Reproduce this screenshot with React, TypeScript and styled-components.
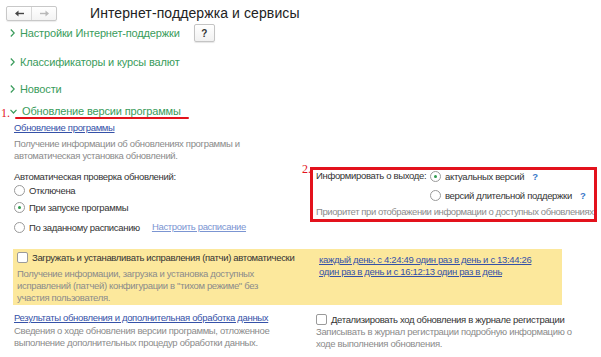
import React from 'react';
import styled, { createGlobalStyle } from 'styled-components';

const GlobalStyle = createGlobalStyle`
  html, body {
    margin: 0;
    padding: 0;
    background: #fff;
  }
  body {
    font-family: "Liberation Sans", Arial, sans-serif;
    color: #333;
  }
`;

const Page = styled.div`
  width: 601px;
  height: 357px;
  overflow: hidden;
  position: relative;
  font-size: 9.5px;
  letter-spacing: -0.33px;
  white-space: nowrap;
`;

const Header = styled.div`
  display: flex;
  align-items: center;
  padding: 6px 0 0 6px;
  height: 15px;
`;

const NavGroup = styled.div`
  display: flex;
  height: 13px;
  border: 1px solid #c8c8c8;
  border-radius: 2px;
  background: linear-gradient(#fff, #f3f3f3);
  box-shadow: 0 1px 1px rgba(0, 0, 0, 0.08);
`;

const NavButton = styled.div<{ $disabled?: boolean }>`
  width: 24px;
  display: flex;
  align-items: center;
  justify-content: center;
  color: ${(p) => (p.$disabled ? '#b8b8b8' : '#444')};
  & + & {
    border-left: 1px solid #d8d8d8;
  }
`;

const Title = styled.h1`
  margin: -2px 0 0 33px;
  font-size: 14px;
  font-weight: normal;
  color: #222;
  letter-spacing: 0.1px;
`;

const SectionRow = styled.div<{ $top: number }>`
  display: flex;
  align-items: center;
  margin-top: ${(p) => p.$top}px;
  padding-left: 10px;
  height: 16px;
  position: relative;
`;

const SectionTitle = styled.span`
  margin-left: 5px;
  font-size: 11px;
  letter-spacing: -0.15px;
  color: #3a9c5c;
`;

const HelpButton = styled.div`
  margin-left: 14px;
  width: 19px;
  height: 16px;
  border: 1px solid #c4c4c4;
  border-radius: 2px;
  background: linear-gradient(#fff, #f1f1f1);
  display: flex;
  align-items: center;
  justify-content: center;
  font-size: 10px;
  font-weight: bold;
  color: #333;
  box-shadow: 0 1px 1px rgba(0, 0, 0, 0.1);
`;

const RedUnderline = styled.div`
  position: absolute;
  left: 15px;
  top: 14px;
  width: 174px;
  height: 2px;
  border-radius: 1px;
  background: #e3121c;
`;

const Marker = styled.span<{ $left: number; $top: number }>`
  position: absolute;
  left: ${(p) => p.$left}px;
  top: ${(p) => p.$top}px;
  font-family: "Liberation Serif", "Times New Roman", serif;
  font-size: 12px;
  letter-spacing: 0;
  color: #e3121c;
`;

const Body = styled.div`
  display: grid;
  grid-template-columns: 296px 1fr;
  padding-left: 14px;
  margin-top: 3px;
`;

const Column = styled.div<{ $top?: number }>`
  display: flex;
  flex-direction: column;
  padding-top: ${(p) => p.$top ?? 0}px;
`;

const Link = styled.a<{ $light?: boolean }>`
  color: ${(p) => (p.$light ? '#7b95d2' : '#3551a8')};
  text-decoration: underline;
  line-height: 12px;
  cursor: pointer;
`;

const Hint = styled.div<{ $top?: number }>`
  color: #8b8b8b;
  line-height: 12px;
  margin-top: ${(p) => p.$top ?? 0}px;
`;

const BoxHint = styled(Hint)`
  grid-column: 1 / 3;
  margin-top: -2px;
  letter-spacing: -0.42px;
`;

const Label = styled.div<{ $top?: number }>`
  line-height: 12px;
  margin-top: ${(p) => p.$top ?? 0}px;
`;

const RadioRow = styled.div<{ $top?: number }>`
  display: flex;
  align-items: center;
  gap: 4px;
  height: 12px;
  margin-top: ${(p) => p.$top ?? 0}px;
`;

const RadioCircle = styled.span<{ $checked?: boolean }>`
  box-sizing: border-box;
  width: 11px;
  height: 11px;
  border-radius: 50%;
  border: 1px solid #9a9a9a;
  background: #fff;
  display: inline-flex;
  align-items: center;
  justify-content: center;
  flex: none;
  &::after {
    content: '';
    width: 3px;
    height: 3px;
    border-radius: 50%;
    background: ${(p) => (p.$checked ? '#2f9a4e' : 'transparent')};
  }
`;

const CheckBox = styled.span`
  box-sizing: border-box;
  width: 11px;
  height: 11px;
  border: 1px solid #9a9a9a;
  border-radius: 2px;
  background: #fff;
  flex: none;
`;

const Question = styled.span`
  color: #3a78c8;
  font-weight: bold;
  margin-left: 4px;
`;

const RightColumn = styled.div`
  padding-top: 45px;
  position: relative;
`;

const RedBox = styled.div`
  box-sizing: border-box;
  width: 287px;
  height: 55px;
  border: 3px solid #e3121c;
  padding: 0 0 0 3px;
  display: grid;
  grid-template-columns: 114px 1fr;
  row-gap: 6px;
`;

const YellowBand = styled.div`
  display: grid;
  grid-template-columns: 302px 1fr;
  margin: 16px 0 0 13px;
  width: 549px;
  height: 56px;
  background: #fce89c;
  box-sizing: border-box;
  padding: 1px 0 0 4px;
`;

const CheckRow = styled.div`
  display: flex;
  align-items: center;
  gap: 4px;
  height: 14px;
`;

const Bottom = styled.div`
  display: grid;
  grid-template-columns: 302px 1fr;
  padding-left: 14px;
  margin-top: 7px;
`;

const Chevron = ({ open }: { open?: boolean }) =>
  open ? (
    <svg width="7" height="5" viewBox="0 0 7 5">
      <polyline points="0.5,0.8 3.5,4 6.5,0.8" fill="none" stroke="#3a9c5c" strokeWidth="1.2" />
    </svg>
  ) : (
    <svg width="5" height="8" viewBox="0 0 5 8">
      <polyline points="0.8,0.5 4.2,4 0.8,7.5" fill="none" stroke="#3a9c5c" strokeWidth="1.2" />
    </svg>
  );

const Arrow = ({ back }: { back?: boolean }) => (
  <svg width="9" height="7" viewBox="0 0 9 7">
    {back ? (
      <>
        <line x1="2" y1="3.5" x2="9" y2="3.5" stroke="currentColor" strokeWidth="1.4" />
        <polygon points="0,3.5 3.5,0.5 3.5,6.5" fill="currentColor" />
      </>
    ) : (
      <>
        <line x1="0" y1="3.5" x2="7" y2="3.5" stroke="currentColor" strokeWidth="1.4" />
        <polygon points="9,3.5 5.5,0.5 5.5,6.5" fill="currentColor" />
      </>
    )}
  </svg>
);

const Radio = ({ checked, children, top }: { checked?: boolean; children: React.ReactNode; top?: number }) => (
  <RadioRow $top={top}>
    <RadioCircle $checked={checked} />
    {children}
  </RadioRow>
);

export default function App() {
  return (
    <Page>
      <GlobalStyle />
      <Header>
        <NavGroup>
          <NavButton>
            <Arrow back />
          </NavButton>
          <NavButton $disabled>
            <Arrow />
          </NavButton>
        </NavGroup>
        <Title>Интернет-поддержка и сервисы</Title>
      </Header>

      <SectionRow $top={4}>
        <Chevron />
        <SectionTitle>Настройки Интернет-поддержки</SectionTitle>
        <HelpButton>?</HelpButton>
      </SectionRow>
      <SectionRow $top={13}>
        <Chevron />
        <SectionTitle>Классификаторы и курсы валют</SectionTitle>
      </SectionRow>
      <SectionRow $top={11}>
        <Chevron />
        <SectionTitle>Новости</SectionTitle>
      </SectionRow>
      <SectionRow $top={6}>
        <Marker $left={1} $top={3}>1.</Marker>
        <Chevron open />
        <SectionTitle>Обновление версии программы</SectionTitle>
        <RedUnderline />
      </SectionRow>

      <Body>
        <Column>
          <Link>Обновление программы</Link>
          <Hint $top={4}>
            Получение информации об обновлениях программы и
            <br />
            автоматическая установка обновлений.
          </Hint>
          <Label $top={9}>Автоматическая проверка обновлений:</Label>
          <Radio top={1}>Отключена</Radio>
          <Radio checked top={5}>
            При запуске программы
          </Radio>
          <Radio top={8}>
            По заданному расписанию
            <Link $light style={{ marginLeft: 8 }}>Настроить расписание</Link>
          </Radio>
        </Column>
        <RightColumn>
          <Marker $left={-8} $top={40}>2.</Marker>
          <RedBox>
            <Label>Информировать о выходе:</Label>
            <Radio checked>
              актуальных версий<Question>?</Question>
            </Radio>
            <span />
            <Radio>
              версий длительной поддержки<Question>?</Question>
            </Radio>
            <BoxHint>Приоритет при отображении информации о доступных обновлениях</BoxHint>
          </RedBox>
        </RightColumn>
      </Body>

      <YellowBand>
        <Column>
          <CheckRow>
            <CheckBox />
            Загружать и устанавливать исправления (патчи) автоматически
          </CheckRow>
          <Hint $top={4}>
            Получение информации, загрузка и установка доступных
            <br />
            исправлений (патчей) конфигурации в "тихом режиме" без
            <br />
            участия пользователя.
          </Hint>
        </Column>
        <Column $top={4}>
          <Link>
            каждый день; с 4:24:49 один раз в день и с 13:44:26
            <br />
            один раз в день и с 16:12:13 один раз в день
          </Link>
        </Column>
      </YellowBand>

      <Bottom>
        <Column>
          <Link>Результаты обновления и дополнительная обработка данных</Link>
          <Hint $top={1}>
            Сведения о ходе обновления версии программы, отложенное
            <br />
            выполнение дополнительных процедур обработки данных.
          </Hint>
        </Column>
        <Column>
          <CheckRow>
            <CheckBox />
            Детализировать ход обновления в журнале регистрации
          </CheckRow>
          <Hint>
            Записывать в журнал регистрации подробную информацию о
            <br />
            ходе выполнения обновления.
          </Hint>
        </Column>
      </Bottom>
    </Page>
  );
}
